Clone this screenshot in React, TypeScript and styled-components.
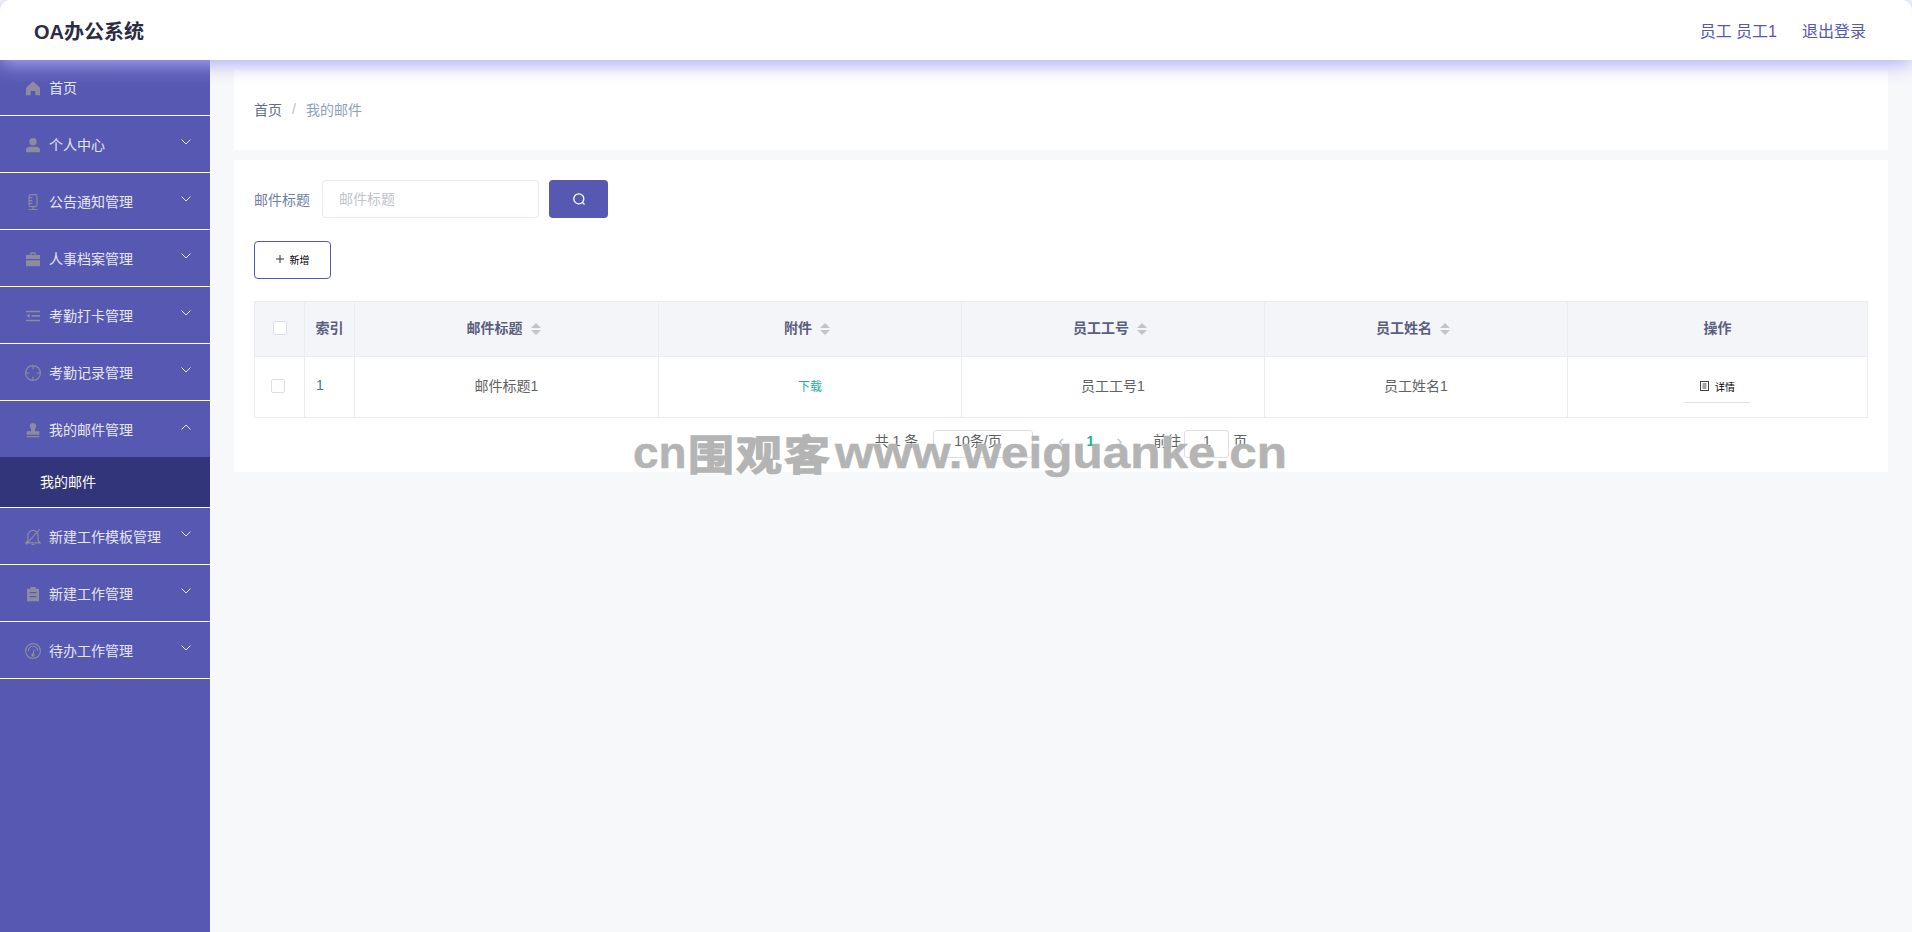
import React from 'react'
import styled, { createGlobalStyle } from 'styled-components'

const color = {
  PRIMARY: '#5658b2',
  DARK: '#33357a',
  PAGE: '#f7f8fa',
  LINE: '#ebedf5',
  ICON: '#8b8d9e',
  GREEN: '#19b394',
}

const GlobalStyle = createGlobalStyle`
  html, body {
    margin: 0;
    padding: 0;
    height: 100%;
    background: ${color.PAGE};
    font-family: "Liberation Sans", "Noto Sans CJK SC", sans-serif;
    font-size: 14px;
  }
  #root {
    height: 100%;
  }
  * {
    box-sizing: border-box;
  }
`

const Fill = ({ children }: { children: React.ReactNode }) => (
  <svg width="16" height="16" viewBox="0 0 24 24" fill="currentColor">
    {children}
  </svg>
)

const Line = ({ children }: { children: React.ReactNode }) => (
  <svg width="16" height="16" viewBox="1 1 22 22" fill="none" stroke="currentColor" strokeWidth="1.6">
    {children}
  </svg>
)

const icons: Record<string, React.ReactNode> = {
  home: (
    <Fill>
      <path d="M12 2 22.500 11.500V23H15.500V16.500H8.500V23H1.500V11.500Z" />
    </Fill>
  ),
  user: (
    <Fill>
      <circle cx="12" cy="7" r="5.500" />
      <path d="M1.500 23V19.500C1.500 16.500 4 14.500 7 14.500H17C20 14.500 22.500 16.500 22.500 19.500V23Z" />
    </Fill>
  ),
  mic: (
    <Line>
      <rect x="6.500" y="1.800" width="11" height="16.500" rx="2.500" />
      <path d="M6.500 6H11M6.500 10H11M6.500 14H11M12 18.500V22.500M6 22.500H18" />
    </Line>
  ),
  case: (
    <Fill>
      <path d="M8 2H16V6H22.500V12H1.500V6H8ZM10 4V6H14V4ZM1.500 14H22.500V23H1.500Z" />
    </Fill>
  ),
  indent: (
    <Fill>
      <path d="M1.500 4H22.500V6.500H1.500ZM10 10.500H22.500V13H10ZM1.500 17.500H22.500V20H1.500ZM7 8.500V15L2 11.750Z" />
    </Fill>
  ),
  aim: (
    <Line>
      <circle cx="12" cy="12" r="10.200" />
      <path d="M12 1.500V7M12 17V22.500M1.500 12H7M17 12H22.500" />
    </Line>
  ),
  stamp: (
    <Fill>
      <path d="M12 1.500A5 5 0 0 1 15 10.500V14H21.500V19H2.500V14H9V10.500A5 5 0 0 1 12 1.500ZM2.500 21H21.500V23H2.500Z" />
    </Fill>
  ),
  bell: (
    <Line>
      <path d="M12 3A7 7 0 0 1 19 10V17L22 20H2L5 17V10A7 7 0 0 1 12 3ZM10 22.500H14M21 1.500 2.500 22.500" />
    </Line>
  ),
  clip: (
    <Fill>
      <path d="M8 1.500H16V4H21V23H3V4H8ZM7 9V11H17V9ZM7 15V17H17V15Z" />
    </Fill>
  ),
  gauge: (
    <Line>
      <circle cx="12" cy="12" r="10.200" />
      <path d="M5.500 12A6.500 6.500 0 0 1 18.500 12M12 18 13.500 10" />
      <circle cx="12" cy="17.500" r="1.500" fill="currentColor" />
    </Line>
  ),
}

type NavEntry = { label: string; icon: string; sub?: string; arrow?: boolean }

const navItems: NavEntry[] = [
  { label: '首页', icon: 'home' },
  { label: '个人中心', icon: 'user', arrow: true },
  { label: '公告通知管理', icon: 'mic', arrow: true },
  { label: '人事档案管理', icon: 'case', arrow: true },
  { label: '考勤打卡管理', icon: 'indent', arrow: true },
  { label: '考勤记录管理', icon: 'aim', arrow: true },
  { label: '我的邮件管理', icon: 'stamp', arrow: true, sub: '我的邮件' },
  { label: '新建工作模板管理', icon: 'bell', arrow: true },
  { label: '新建工作管理', icon: 'clip', arrow: true },
  { label: '待办工作管理', icon: 'gauge', arrow: true },
]

const Chevron = ({ open }: { open?: boolean }) => (
  <ChevronBox>
    <svg width="10" height="6" viewBox="0 0 10 6" fill="none" stroke="#e8e8f4" strokeWidth="1">
      <path d={open ? 'M0.500 5.500 5 1 9.500 5.500' : 'M0.500 0.500 5 5 9.500 0.500'} />
    </svg>
  </ChevronBox>
)

const Sort = () => (
  <SortBox>
    <span className="up" />
    <span className="down" />
  </SortBox>
)

const columns = [
  { label: '邮件标题', value: '邮件标题1' },
  { label: '附件', value: '下载', link: true },
  { label: '员工工号', value: '员工工号1' },
  { label: '员工姓名', value: '员工姓名1' },
]

export default function App() {
  return (
    <Page>
      <GlobalStyle />
      <Header>
        <Title>OA办公系统</Title>
        <UserArea>
          <span>员工 员工1</span>
          <span>退出登录</span>
        </UserArea>
      </Header>
      <Body>
        <Sidebar>
          {navItems.map((item) => (
            <React.Fragment key={item.label}>
              <NavRow $open={!!item.sub}>
                <NavIcon>{icons[item.icon]}</NavIcon>
                <NavLabel>{item.label}</NavLabel>
                {item.arrow && <Chevron open={!!item.sub} />}
              </NavRow>
              {item.sub && <SubRow>{item.sub}</SubRow>}
            </React.Fragment>
          ))}
        </Sidebar>
        <Main>
          <Crumbs>
            <span className="home">首页</span>
            <span className="slash">/</span>
            <span className="current">我的邮件</span>
          </Crumbs>
          <ListCard>
            <SearchBar>
              <SearchLabel>邮件标题</SearchLabel>
              <SearchInput placeholder="邮件标题" readOnly />
              <SearchButton aria-label="搜索">
                <svg width="14" height="14" viewBox="0 0 14 14" fill="none" stroke="#fff" strokeWidth="1.300">
                  <circle cx="6.800" cy="6.800" r="5" />
                  <path d="M10.500 10.500 12.500 12.500" />
                </svg>
              </SearchButton>
            </SearchBar>
            <AddButton>
              <svg width="8" height="8" viewBox="0 0 8 8" stroke="#333" strokeWidth="1">
                <path d="M4 0V8M0 4H8" />
              </svg>
              新增
            </AddButton>
            <Table>
              <colgroup>
                <col width="50" />
                <col width="50" />
                <col width="304" />
                <col width="303" />
                <col width="303" />
                <col width="303" />
                <col />
              </colgroup>
              <thead>
                <tr>
                  <HeadCell>
                    <Check $nudge={0} />
                  </HeadCell>
                  <HeadCell>索引</HeadCell>
                  {columns.map((c) => (
                    <SortCell key={c.label}>
                      {c.label}
                      <Sort />
                    </SortCell>
                  ))}
                  <HeadCell>操作</HeadCell>
                </tr>
              </thead>
              <tbody>
                <tr>
                  <BodyCell>
                    <Check $nudge={-2} />
                  </BodyCell>
                  <IndexCell>1</IndexCell>
                  {columns.map((c) => (
                    <BodyCell key={c.label}>
                      {c.link ? <Download>{c.value}</Download> : c.value}
                    </BodyCell>
                  ))}
                  <BodyCell>
                    <DetailButton>
                      <svg width="9" height="10" viewBox="0 0 9 10" fill="none" stroke="#444" strokeWidth="1">
                        <rect x="0.500" y="0.500" width="8" height="9" />
                        <path d="M2.500 3H6.500M2.500 5H6.500M2.500 7H6.500" />
                      </svg>
                      详情
                    </DetailButton>
                  </BodyCell>
                </tr>
              </tbody>
            </Table>
            <Pager>
              <span>共 1 条</span>
              <PageSize>10条/页</PageSize>
              <PageArrow>‹</PageArrow>
              <PageNumber>1</PageNumber>
              <PageArrow>›</PageArrow>
              <JumpLabel>前往</JumpLabel>
              <JumpBox>1</JumpBox>
              <span>页</span>
            </Pager>
          </ListCard>
        </Main>
      </Body>
      <Watermark>
        <span className="latin lead">cn</span>
        <span className="cjk">围观客</span>
        <span className="latin site">www.weiguanke.cn</span>
      </Watermark>
    </Page>
  )
}

const Page = styled.div`
  position: relative;
  display: flex;
  flex-direction: column;
  height: 932px;
  overflow: hidden;
`

const Header = styled.header`
  position: relative;
  z-index: 2;
  display: flex;
  align-items: center;
  justify-content: space-between;
  flex: 0 0 60px;
  padding: 0 46px 0 34px;
  background: #fff;
  border-radius: 10px 10px 0 0;
  box-shadow: 0 4px 20px rgb(172, 172, 244);
`

const Title = styled.div`
  font-size: 20px;
  font-weight: 700;
  color: #2c2c44;
`

const UserArea = styled.div`
  display: flex;
  gap: 25px;
  font-size: 16px;
  color: ${color.PRIMARY};
`

const Body = styled.div`
  display: flex;
  flex: 1;
  min-height: 0;
`

const Sidebar = styled.nav`
  flex: 0 0 210px;
  background: ${color.PRIMARY};
`

const NavRow = styled.div<{ $open: boolean }>`
  display: flex;
  align-items: center;
  height: ${(p) => (p.$open ? '56px' : '57px')};
  padding: 1px 0 0 25px;
  color: #e6e6f0;
  border-bottom: ${(p) => (p.$open ? 'none' : '1px solid #fff')};

  &:first-child {
    height: 56px;
    padding-top: 0;
  }
`

const NavIcon = styled.span`
  display: flex;
  width: 24px;
  color: ${color.ICON};
`

const NavLabel = styled.span`
  flex: 1;
  line-height: 20px;
`

const ChevronBox = styled.span`
  display: flex;
  margin: -6px 19px 0 0;
`

const SubRow = styled.div`
  display: flex;
  align-items: center;
  height: 51px;
  padding: 0 0 2px 40px;
  color: #fff;
  background: ${color.DARK};
  border-bottom: 1px solid #fff;
`

const Main = styled.main`
  flex: 1;
  min-width: 0;
  padding: 10px 24px;
`

const Crumbs = styled.div`
  display: flex;
  align-items: center;
  height: 80px;
  padding: 0 0 2px 20px;
  background: #fff;

  & > .home {
    color: #666c8c;
  }
  & > .slash {
    margin: 0 10px;
    color: #b8bcc8;
  }
  & > .current {
    color: #8fa1bd;
  }
`

const ListCard = styled.section`
  height: 312px;
  margin-top: 10px;
  padding: 20px;
  background: #fff;
`

const SearchBar = styled.div`
  display: flex;
  align-items: center;
  height: 38px;
`

const SearchLabel = styled.label`
  width: 68px;
  color: #6f7ea6;
`

const SearchInput = styled.input`
  width: 217px;
  height: 38px;
  padding: 0 16px;
  font: inherit;
  background: #fff;
  border: 1px solid #e8e9f8;
  border-radius: 4px;
  outline: none;

  &::placeholder {
    color: #c0c4cc;
  }
`

const SearchButton = styled.button`
  display: flex;
  align-items: center;
  justify-content: center;
  width: 59px;
  height: 38px;
  margin-left: 10px;
  padding: 0;
  background: ${color.PRIMARY};
  border: 0;
  border-radius: 4px;
`

const AddButton = styled.button`
  display: flex;
  align-items: center;
  justify-content: center;
  gap: 6px;
  width: 77px;
  height: 38px;
  margin-top: 23px;
  padding: 0 0 2px;
  font: inherit;
  font-size: 10px;
  color: #000;
  background: #fff;
  border: 1px solid ${color.PRIMARY};
  border-radius: 4px;
`

const Table = styled.table`
  width: 1614px;
  margin-top: 22px;
  border-collapse: collapse;
  table-layout: fixed;
`

const HeadCell = styled.th`
  height: 55px;
  padding: 0 0 4px;
  font-size: 14px;
  font-weight: 700;
  color: #5a5e80;
  text-align: center;
  background: #f4f5f8;
  border: 1px solid ${color.LINE};
`

const SortCell = styled(HeadCell)`
  padding-right: 6px;
`

const BodyCell = styled.td`
  height: 61px;
  padding: 0 0 4px;
  color: #606266;
  text-align: center;
  border: 1px solid ${color.LINE};
`

const IndexCell = styled(BodyCell)`
  padding-left: 11px;
  color: #4f6f96;
  text-align: left;
`

const Check = styled.span<{ $nudge: number }>`
  display: inline-block;
  width: 14px;
  height: 14px;
  vertical-align: middle;
  background: #fff;
  border: 1px solid #dcdfe6;
  border-radius: 2px;
  transform: translateX(${(p) => p.$nudge}px);
`

const SortBox = styled.span`
  display: inline-flex;
  flex-direction: column;
  gap: 2px;
  margin-left: 8px;
  vertical-align: middle;

  & > .up,
  & > .down {
    width: 0;
    height: 0;
    border-left: 5px solid transparent;
    border-right: 5px solid transparent;
  }
  & > .up {
    border-bottom: 5px solid #c0c4cc;
  }
  & > .down {
    border-top: 5px solid #c0c4cc;
  }
`

const Download = styled.span`
  font-size: 12px;
  color: ${color.GREEN};
`

const DetailButton = styled.span`
  display: inline-flex;
  align-items: center;
  justify-content: center;
  gap: 6px;
  width: 65px;
  height: 32px;
  margin-top: 3px;
  font-size: 10px;
  color: #000;
  border-bottom: 1px solid #dfe0e6;
`

const Pager = styled.div`
  display: flex;
  align-items: flex-start;
  justify-content: center;
  height: 28px;
  margin-top: 12px;
  line-height: 22px;
  color: #606266;
`

const PageSize = styled.span`
  display: flex;
  align-items: center;
  width: 100px;
  height: 28px;
  margin: 0 23px 0 15px;
  padding: 0 0 6px 20px;
  border: 1px solid #dcdfe6;
  border-radius: 3px;
`

const PageArrow = styled.span`
  width: 10px;
  font-size: 18px;
  color: #c0c4cc;
  text-align: center;
`

const PageNumber = styled.span`
  width: 48px;
  font-weight: 700;
  color: ${color.GREEN};
  text-align: center;
`

const JumpLabel = styled.span`
  margin-left: 29px;
`

const JumpBox = styled.span`
  display: flex;
  align-items: center;
  justify-content: center;
  width: 45px;
  height: 28px;
  margin: 0 4px 0 3px;
  padding-bottom: 6px;
  border: 1px solid #dcdfe6;
  border-radius: 3px;
`

const Watermark = styled.div`
  position: absolute;
  top: 415px;
  left: 633px;
  z-index: 3;
  display: flex;
  align-items: baseline;
  color: #b4b4b4;
  font-weight: 700;
  white-space: nowrap;
  pointer-events: none;

  & > .latin {
    display: inline-block;
    font-family: "Liberation Sans", sans-serif;
    font-size: 45px;
    transform-origin: left bottom;
    -webkit-text-stroke: 0.5px #b4b4b4;
  }
  & > .lead {
    width: 55px;
    transform: scaleX(1.02);
  }
  & > .cjk {
    display: inline-block;
    width: 147px;
    font-family: "Noto Sans CJK SC", sans-serif;
    font-size: 46px;
    letter-spacing: 2px;
    transform: scaleY(0.88);
    transform-origin: left bottom;
    -webkit-text-stroke: 1.5px #b4b4b4;
  }
  & > .site {
    transform: scaleX(1.1);
  }
`
